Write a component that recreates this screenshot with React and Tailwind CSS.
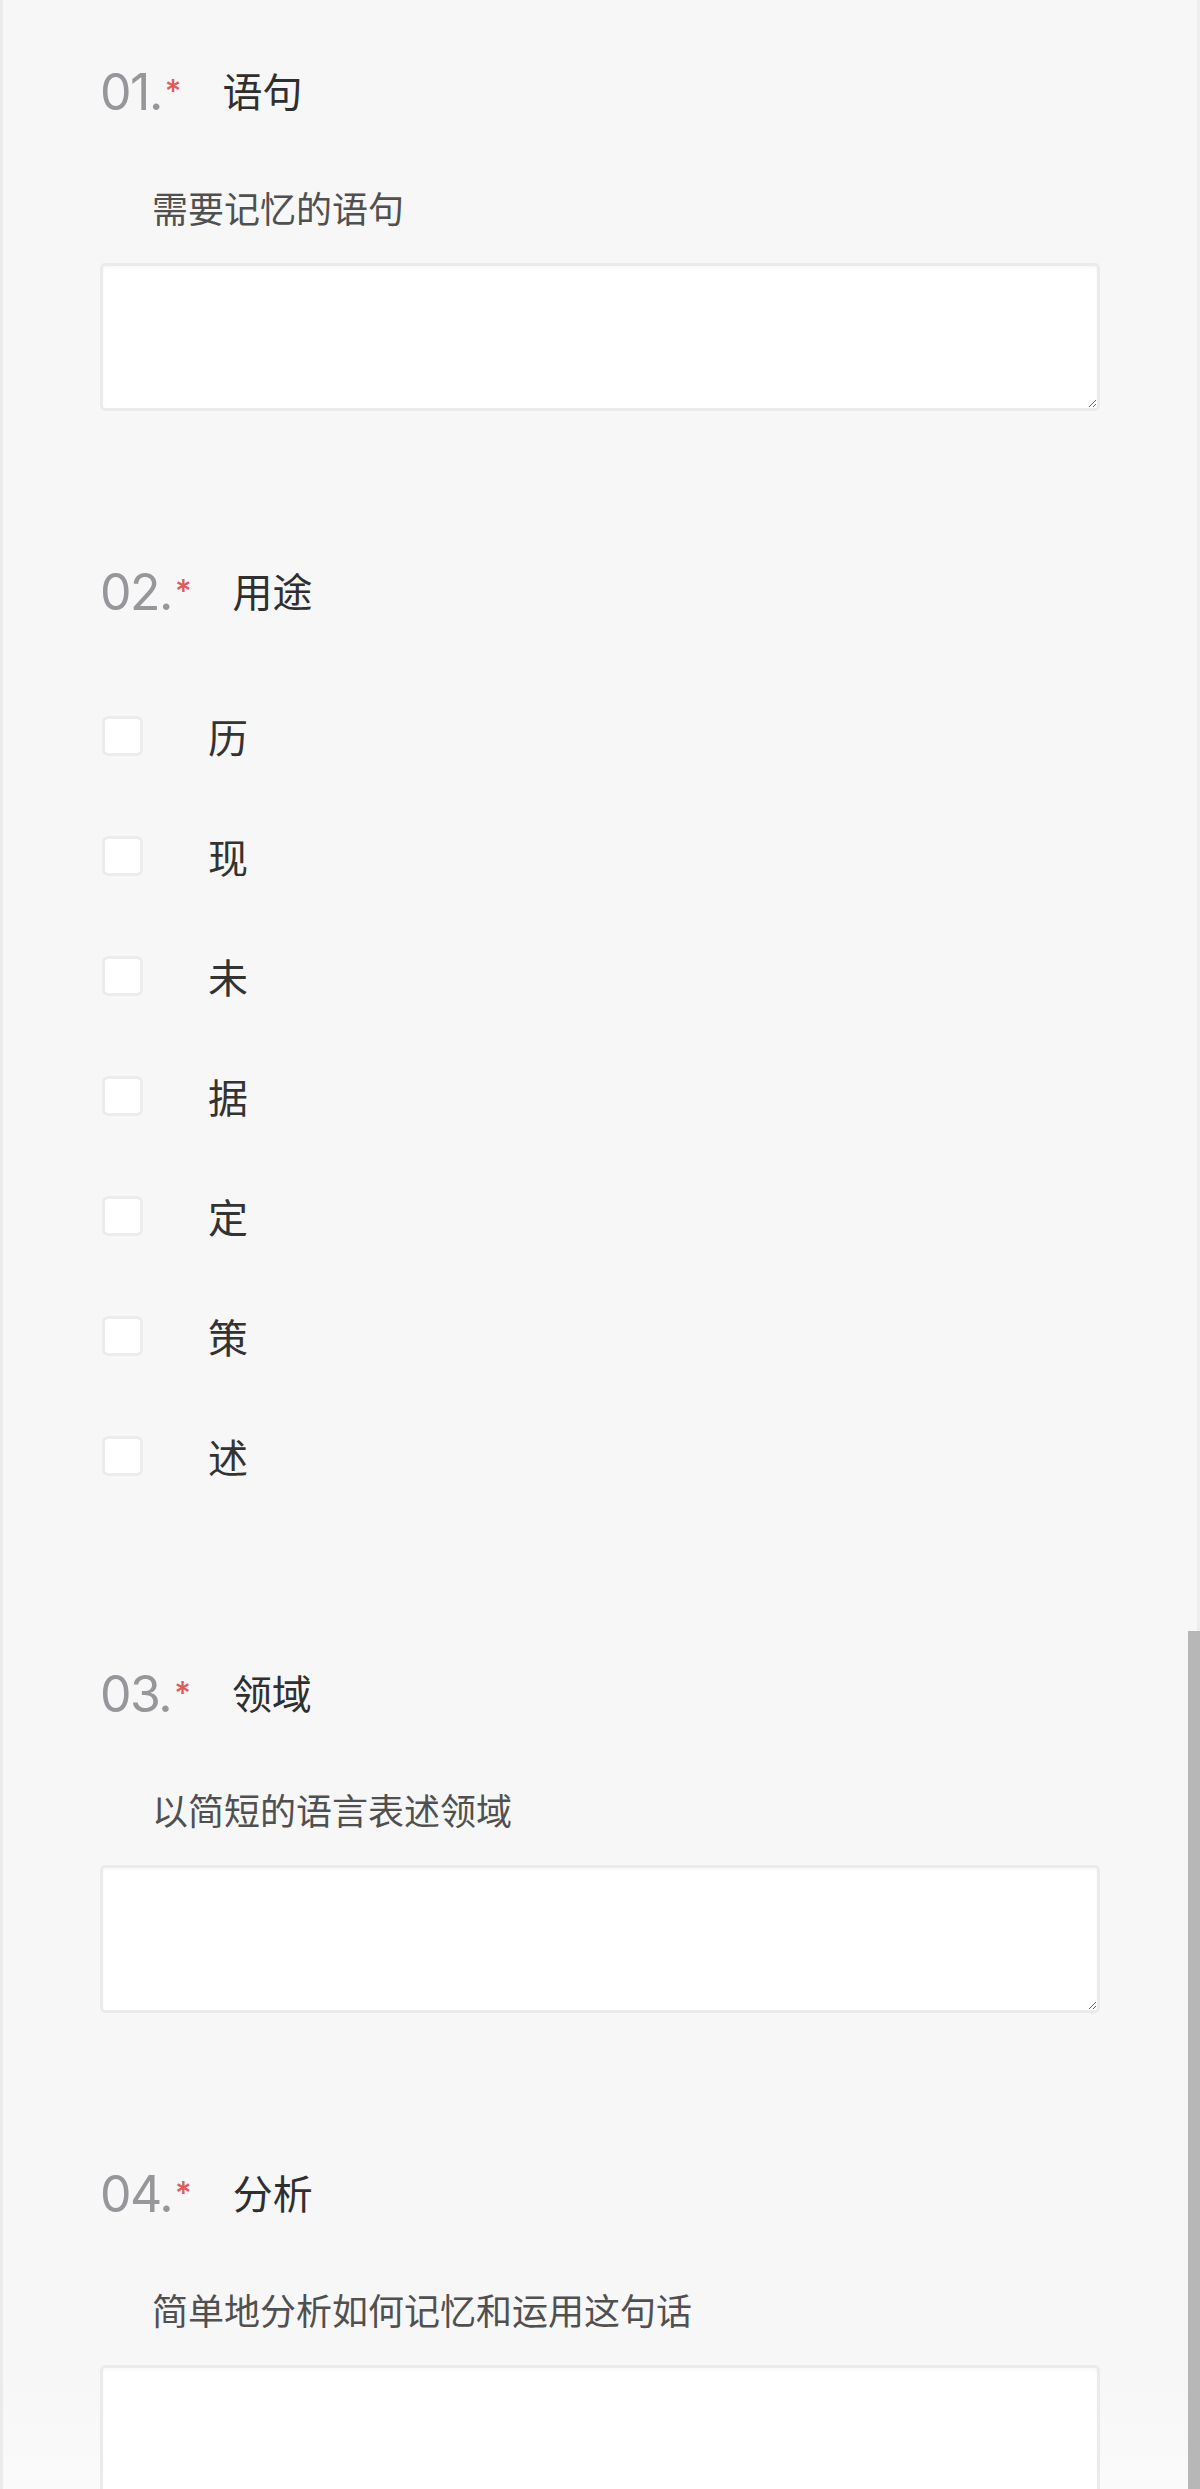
const questions = [
  { no: "01.", title: "语句", type: "text", hint: "需要记忆的语句" },
  {
    no: "02.",
    title: "用途",
    type: "check",
    options: ["历", "现", "未", "据", "定", "策", "述"],
  },
  { no: "03.", title: "领域", type: "text", hint: "以简短的语言表述领域" },
  { no: "04.", title: "分析", type: "text", hint: "简单地分析如何记忆和运用这句话" },
];

function Header({ no, title }) {
  return (
    <div className="flex items-start h-[48px]">
      <span className="font-['Inter',sans-serif] text-[50px] leading-none font-normal text-[#97979b] tracking-[-1.5px] -mt-[1px]">
        {no}
      </span>
      <span className="font-['Inter',sans-serif] text-[32px] leading-none font-medium text-[#df5a5a] mt-[8px] ml-[3px]">
        *
      </span>
      <span className="font-['Noto_Sans_CJK_SC',sans-serif] text-[40px] leading-none text-[#2f2f2f] mt-[2px] ml-[41px]">
        {title}
      </span>
    </div>
  );
}

function TextQuestion({ q }) {
  return (
    <div>
      <Header no={q.no} title={q.title} />
      <p className="mt-[73px] pl-[52px] font-['Noto_Sans_CJK_SC',sans-serif] text-[36px] leading-none text-[#505050]">
        {q.hint}
      </p>
      <textarea className="mt-[38px] block w-[1000px] h-[148px] border-[3px] border-[#ebebeb] rounded-[5px] bg-white shadow-[inset_0_2px_3px_rgba(0,0,0,0.03)] outline-none" />
    </div>
  );
}

function CheckQuestion({ q }) {
  return (
    <div>
      <Header no={q.no} title={q.title} />
      <div className="mt-[100px] flex flex-col gap-[80px]">
        {q.options.map((o) => (
          <label key={o} className="flex items-start">
            <span className="ml-[2px] w-[41px] h-[40px] rounded-[6px] border-[3px] border-[#ececec] bg-white" />
            <span className="ml-[65px] font-['Noto_Sans_CJK_SC',sans-serif] text-[40px] leading-none text-[#333333]">
              {o}
            </span>
          </label>
        ))}
      </div>
    </div>
  );
}

export default function App() {
  return (
    <div className="relative h-[2489px] overflow-hidden border-l-[3px] border-[#ebebeb] bg-[linear-gradient(to_bottom,#f7f7f7_0px,#f7f7f7_2370px,#fafafa_2489px)]">
      <div className="pl-[97px] pt-[68px] flex flex-col">
        <TextQuestion q={questions[0]} />
        <div className="mt-[157px]">
          <CheckQuestion q={questions[1]} />
        </div>
        <div className="mt-[194px]">
          <TextQuestion q={questions[2]} />
        </div>
        <div className="mt-[157px]">
          <TextQuestion q={questions[3]} />
        </div>
      </div>
      {/* scrollbar */}
      <div className="absolute right-0 top-0 h-full w-[3px] bg-[#ededed]" />
      <div className="absolute right-0 top-[1631px] bottom-0 w-[12px] bg-[#b7b7b7]" />
    </div>
  );
}
